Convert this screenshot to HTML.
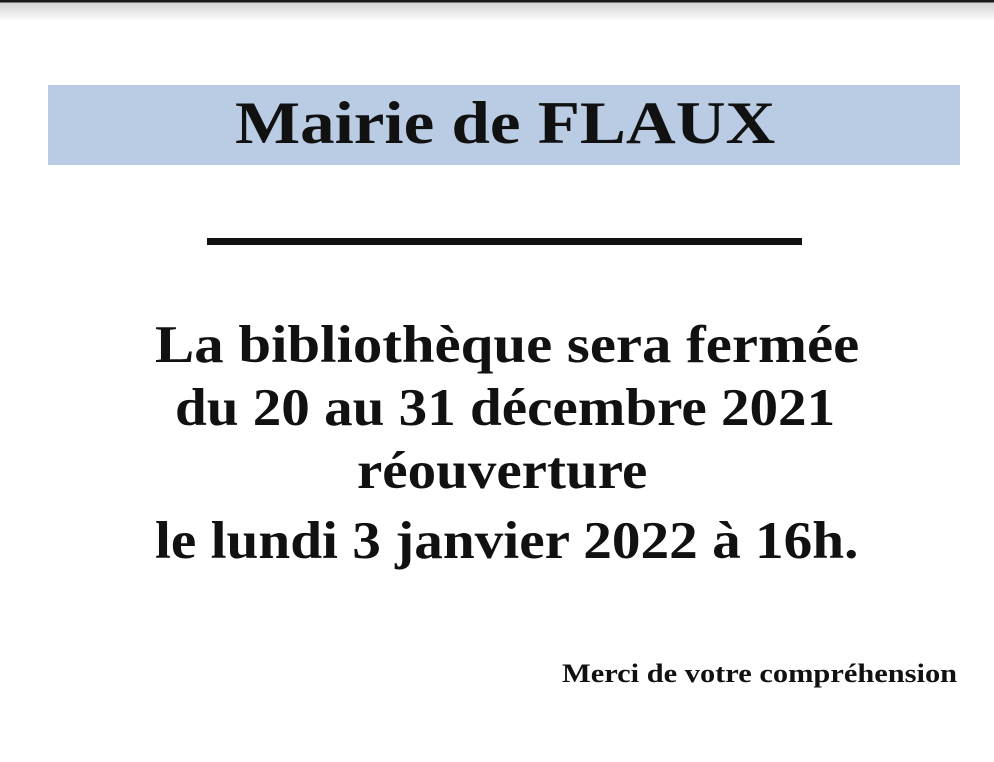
<!DOCTYPE html>
<html><head><meta charset="utf-8"><style>
html,body{margin:0;padding:0;width:994px;height:762px;background:#fff;overflow:hidden;position:relative;font-family:"Liberation Serif",serif;font-weight:bold;color:#111}
.top{position:absolute;left:0;top:0;width:994px;height:22px;background:linear-gradient(#1a1a1a 0,#1a1a1a 2px,#d4d4d4 3px,#fff 22px)}
.band{position:absolute;left:48px;top:85px;width:912px;height:80px;background:#b9cce4}
.t{position:absolute;white-space:nowrap;line-height:1.15;transform-origin:0 0}
.rule{position:absolute;left:207px;top:238px;width:595px;height:7px;background:#111}
</style></head><body>
<div class="top"></div>
<div class="band"></div>
<div class="t" style="top:89px;left:235px;font-size:60px;transform:scaleX(1.15)">Mairie de FLAUX</div>
<div class="rule"></div>
<div class="t" style="top:315px;left:155px;font-size:53px;transform:scaleX(1.11)">La bibliothèque sera fermée</div>
<div class="t" style="top:378px;left:175px;font-size:53px;transform:scaleX(1.077)">du 20 au 31 décembre 2021</div>
<div class="t" style="top:441px;left:357px;font-size:53px;transform:scaleX(1.076)">réouverture</div>
<div class="t" style="top:511px;left:155px;font-size:53px;transform:scaleX(1.08)">le lundi 3 janvier 2022 à 16h.</div>
<div class="t" style="top:659px;left:562px;font-size:26px;transform:scaleX(1.17)">Merci de votre compréhension</div>
</body></html>
